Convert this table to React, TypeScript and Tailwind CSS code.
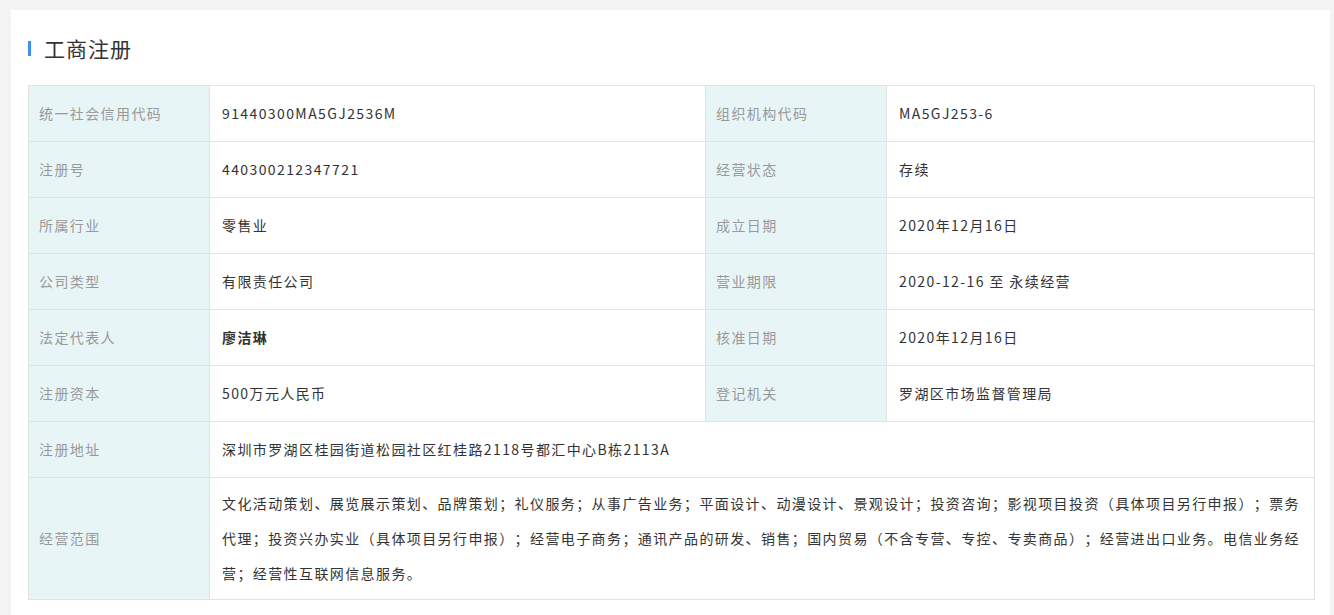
import React from 'react';

const FONT = '"Noto Sans CJK SC", "Noto Sans", sans-serif';

type Pair = { label: string; value: string; bold?: boolean };

const rows: Array<[Pair, Pair]> = [
  [
    { label: '统一社会信用代码', value: '91440300MA5GJ2536M' },
    { label: '组织机构代码', value: 'MA5GJ253-6' },
  ],
  [
    { label: '注册号', value: '440300212347721' },
    { label: '经营状态', value: '存续' },
  ],
  [
    { label: '所属行业', value: '零售业' },
    { label: '成立日期', value: '2020年12月16日' },
  ],
  [
    { label: '公司类型', value: '有限责任公司' },
    { label: '营业期限', value: '2020-12-16 至 永续经营' },
  ],
  [
    { label: '法定代表人', value: '廖洁琳', bold: true },
    { label: '核准日期', value: '2020年12月16日' },
  ],
  [
    { label: '注册资本', value: '500万元人民币' },
    { label: '登记机关', value: '罗湖区市场监督管理局' },
  ],
];

const scope =
  '文化活动策划、展览展示策划、品牌策划；礼仪服务；从事广告业务；平面设计、动漫设计、景观设计；投资咨询；影视项目投资（具体项目另行申报）；票务代理；投资兴办实业（具体项目另行申报）；经营电子商务；通讯产品的研发、销售；国内贸易（不含专营、专控、专卖商品）；经营进出口业务。电信业务经营；经营性互联网信息服务。';

function Label({ children }: { children: React.ReactNode }) {
  return (
    <div className="flex items-center bg-[#e8f5f7] pl-[10px] pr-2 text-[#999] border-r border-[#e3e3e3]">
      {children}
    </div>
  );
}

export default function App() {
  return (
    <div className="min-h-[615px] bg-[#f4f4f4] pt-[10px] pl-[11px] pr-[4px]" style={{ fontFamily: FONT }}>
      <div className="bg-white pl-[17px] pr-[15px] pt-[27px] pb-[16px]">
        <div className="flex items-center h-[22px]">
          <span className="w-[3px] h-[15px] bg-[#3d8ef5]" />
          <h2 className="ml-[13px] text-[21px] leading-none tracking-[1px] text-[#333]">工商注册</h2>
        </div>

        <div className="mt-[26px] border border-[#e3e3e3] text-[14px] tracking-[1.4px] [text-spacing-trim:space-all]">
          {rows.map(([a, b]) => (
            <div
              key={a.label}
              className="grid grid-cols-[181px_496px_181px_1fr] h-[56px] border-b border-[#e3e3e3]"
            >
              <Label>{a.label}</Label>
              <div
                className={`flex items-center pl-3 border-r border-[#e3e3e3] text-[#333] ${
                  a.bold ? 'font-bold' : ''
                }`}
              >
                {a.value}
              </div>
              <Label>{b.label}</Label>
              <div className="flex items-center pl-3 text-[#333]">{b.value}</div>
            </div>
          ))}
          <div className="grid grid-cols-[181px_1fr] h-[56px] border-b border-[#e3e3e3]">
            <Label>注册地址</Label>
            <div className="flex items-center pl-3 text-[#333]">
              深圳市罗湖区桂园街道松园社区红桂路2118号都汇中心B栋2113A
            </div>
          </div>
          <div className="grid grid-cols-[181px_1fr] h-[121px]">
            <Label>经营范围</Label>
            <div className="flex items-center pl-3 pr-3 text-[#333] leading-[35px]">{scope}</div>
          </div>
        </div>
      </div>
    </div>
  );
}
